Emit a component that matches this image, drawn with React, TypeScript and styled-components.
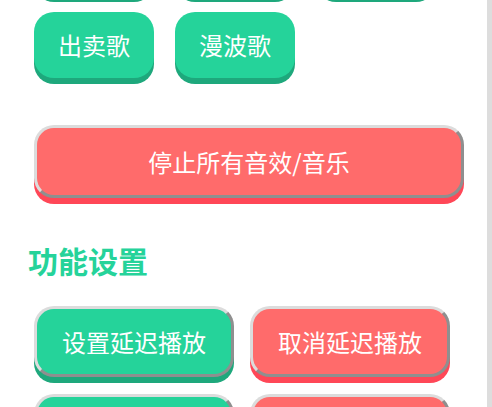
import React from "react";
import styled, { createGlobalStyle, css } from "styled-components";

const Global = createGlobalStyle`
  html, body {
    margin: 0;
    padding: 0;
    overflow: hidden;
    background: #ffffff;
  }
  body {
    font-family: "Noto Sans CJK SC", "Noto Sans", sans-serif;
  }
`;

const Page = styled.div`
  box-sizing: border-box;
  width: 492px;
  height: 407px;
  overflow: hidden;
  border-right: 5px solid #dddddd;
  padding: 0 0 0 28px;
`;

const SongGrid = styled.div`
  display: flex;
  flex-wrap: wrap;
  gap: 16px 21px;
  margin-top: -70px;
  padding-left: 6px;
  width: 420px;
`;

type Tone = "green" | "red";

const tones = {
  green: { face: "#25d39a", shadow: "#1ea87c" },
  red: { face: "#ff6b6b", shadow: "#ff4757" },
};

const Button = styled.button<{ $tone: Tone; $bordered?: boolean }>`
  box-sizing: border-box;
  height: ${(p) => (p.$bordered ? "71px" : "66px")};
  padding: 0 ${(p) => (p.$bordered ? "25px" : "24px")};
  border-radius: 20px;
  font-family: "Noto Sans CJK SC", "Noto Sans", sans-serif;
  font-size: 24px;
  line-height: 1;
  color: #ffffff;
  background: ${(p) => tones[p.$tone].face};
  box-shadow: 0 6px 0 ${(p) => tones[p.$tone].shadow};
  white-space: nowrap;
  cursor: pointer;
  ${(p) =>
    p.$bordered
      ? css`
          border-width: 3px;
          border-style: solid;
          border-color: #dcdcdc #8f8f8f #8f8f8f #dcdcdc;
        `
      : css`
          border: none;
        `}
`;

const StopButton = styled(Button)`
  display: block;
  width: 430px;
  height: 73px;
  margin: 47px 0 0 6px;
`;

const Heading = styled.h2`
  margin: 42px 0 0 0;
  font-size: 30px;
  line-height: 40px;
  font-weight: 700;
  color: #25d39a;
`;

const SettingGrid = styled.div`
  display: flex;
  flex-wrap: wrap;
  gap: 17px 16px;
  margin-top: 26px;
  padding-left: 6px;
  width: 440px;
`;

export default function App() {
  return (
    <>
      <Global />
      <Page>
        <SongGrid>
          <Button $tone="green">摇篮曲</Button>
          <Button $tone="green">催眠曲</Button>
          <Button $tone="green">生日歌</Button>
          <Button $tone="green">出卖歌</Button>
          <Button $tone="green">漫波歌</Button>
        </SongGrid>
        <StopButton $tone="red" $bordered>
          停止所有音效/音乐
        </StopButton>
        <Heading>功能设置</Heading>
        <SettingGrid>
          <Button $tone="green" $bordered>
            设置延迟播放
          </Button>
          <Button $tone="red" $bordered>
            取消延迟播放
          </Button>
          <Button $tone="green" $bordered>
            设置循环播放
          </Button>
          <Button $tone="red" $bordered>
            取消循环播放
          </Button>
        </SettingGrid>
      </Page>
    </>
  );
}
